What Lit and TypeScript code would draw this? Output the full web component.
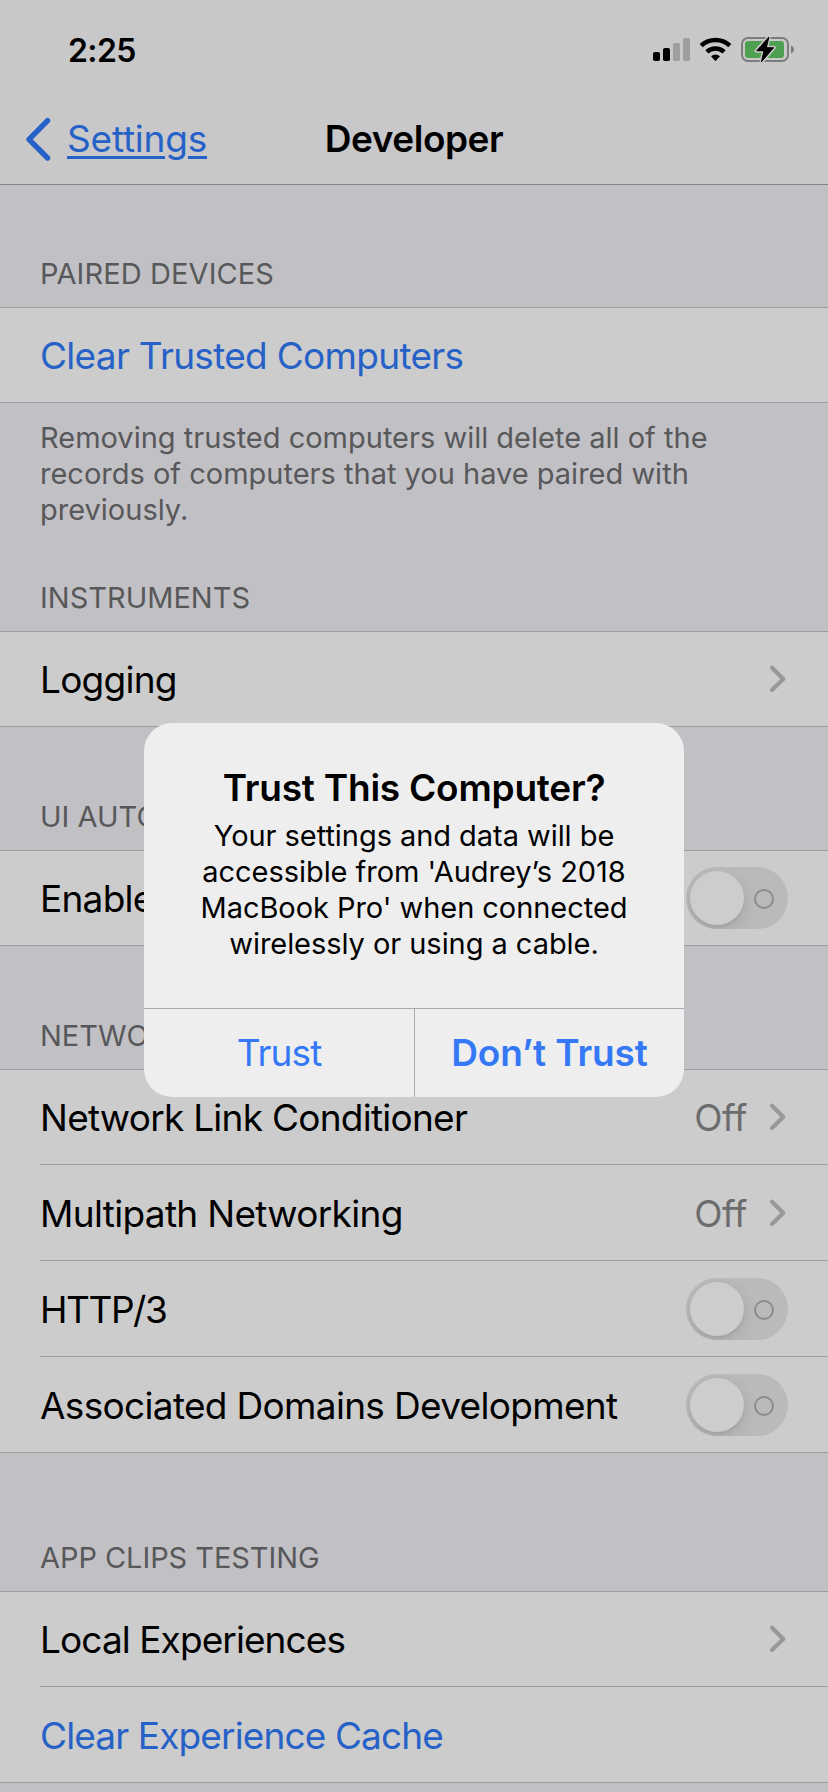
import { LitElement, html, css, svg, nothing } from "lit";
import { customElement, property } from "lit/decorators.js";
import { classMap } from "lit/directives/class-map.js";
import { styleMap } from "lit/directives/style-map.js";

type Row = {
  label: string;
  tracking: number;
  action?: boolean;
  value?: string;
  accessory?: "chevron" | "toggle";
};

type Section = {
  header: string;
  tall?: boolean;
  compact?: boolean;
  tracking?: number;
  rows: Row[];
  footer?: string;
};

const SECTIONS: Section[] = [
  {
    header: "PAIRED DEVICES",
    tracking: 0.09,
    rows: [{ label: "Clear Trusted Computers", tracking: -0.7, action: true }],
    footer:
      "Removing trusted computers will delete all of the records of computers that you have paired with previously.",
  },
  {
    header: "INSTRUMENTS",
    compact: true,
    rows: [{ label: "Logging", tracking: -0.75, accessory: "chevron" }],
  },
  {
    header: "UI AUTOMATION",
    rows: [{ label: "Enable UI Automation", tracking: -0.75, accessory: "toggle" }],
  },
  {
    header: "NETWORKING",
    rows: [
      { label: "Network Link Conditioner", tracking: -0.74, value: "Off", accessory: "chevron" },
      { label: "Multipath Networking", tracking: -0.68, value: "Off", accessory: "chevron" },
      { label: "HTTP/3", tracking: -1.45, accessory: "toggle" },
      { label: "Associated Domains Development", tracking: -0.68, accessory: "toggle" },
    ],
  },
  {
    header: "APP CLIPS TESTING",
    tall: true,
    tracking: -0.06,
    rows: [
      { label: "Local Experiences", tracking: -0.91, accessory: "chevron" },
      { label: "Clear Experience Cache", tracking: -0.87, action: true },
    ],
  },
];

@customElement("status-bar")
class StatusBar extends LitElement {
  static styles = css`
    :host {
      display: flex;
      align-items: center;
      justify-content: space-between;
      box-sizing: border-box;
      height: 93px;
      padding: 6px 32px 0 68px;
    }
    .time {
      padding-top: 1px;
      font-size: 32px;
      font-weight: 600;
      letter-spacing: -0.6px;
      color: #000;
    }
    .icons {
      display: block;
    }
  `;

  render() {
    return html`
      <span class="time">2:25</span>
      <svg class="icons" width="144" height="28" viewBox="652 36 144 28">
        <rect x="653" y="52" width="7" height="9" rx="1.8" />
        <rect x="663" y="48" width="7" height="13" rx="1.8" />
        <rect x="673" y="43" width="7" height="18" rx="1.8" fill="#9f9fa1" />
        <rect x="683" y="38" width="7" height="23" rx="1.8" fill="#9f9fa1" />
        <path d="M701.2 45.6 A21 21 0 0 1 729.8 45.6" fill="none" stroke="#000" stroke-width="4.6" />
        <path d="M706.9 51.9 A12.6 12.6 0 0 1 724.1 51.9" fill="none" stroke="#000" stroke-width="4.6" />
        <path d="M711 56.3 A6.6 6.6 0 0 1 720 56.3 L715.9 60.8 Q715.5 61.1 715.1 60.8 Z" />
        <rect x="742" y="38" width="46" height="23" rx="6" fill="none" stroke="#7c7c7e" stroke-width="2" />
        <rect x="745" y="41" width="39" height="17" rx="3.2" fill="#4f9f50" />
        <path d="M791 45.6 Q794 46.8 794 49.5 Q794 52.2 791 53.4 Z" fill="#7c7c7e" />
        <path
          d="M769 36.6 L756.3 51 H763.6 L761.4 62.2 L774 47.6 H766.5 Z"
          fill="#000"
          stroke="#c8c8ca"
          stroke-width="3.6"
          stroke-linejoin="round"
          paint-order="stroke"
        />
        <path
          d="M769 37 L756.8 50.8 H764 L761.4 61.8 L773.6 47.8 H766.3 Z"
          stroke="#000"
          stroke-width="0.8"
          stroke-linejoin="round"
        />
      </svg>
    `;
  }
}

@customElement("nav-bar")
class NavBar extends LitElement {
  static styles = css`
    :host {
      display: grid;
      grid-template-columns: 1fr auto 1fr;
      align-items: center;
      height: 91px;
      border-bottom: 1px solid #858587;
      font-size: 37px;
      line-height: 45px;
    }
    .back {
      display: flex;
      align-items: center;
      gap: 15px;
      padding-left: 24px;
      color: #2661c7;
    }
    .back-label {
      letter-spacing: -0.2px;
      text-decoration: underline;
      text-decoration-thickness: 3px;
      text-underline-offset: 4px;
    }
    .title {
      font-weight: 600;
      letter-spacing: -0.46px;
      color: #000;
    }
  `;

  render() {
    return html`
      <div class="back">
        <svg width="28" height="46" viewBox="0 0 28 46">
          <path
            d="M23.6 4.6 L5 23.4 L23.6 42"
            fill="none"
            stroke="currentColor"
            stroke-width="5.4"
            stroke-linecap="round"
            stroke-linejoin="round"
          />
        </svg>
        <span class="back-label">Settings</span>
      </div>
      <div class="title">Developer</div>
    `;
  }
}

@customElement("toggle-switch")
class ToggleSwitch extends LitElement {
  static styles = css`
    :host {
      display: flex;
      align-items: center;
      justify-content: space-between;
      box-sizing: border-box;
      width: 102px;
      height: 62px;
      padding: 0 14px 0 4px;
      border-radius: 31px;
      background: #bababa;
      overflow: hidden;
    }
    .knob {
      width: 54px;
      height: 54px;
      border-radius: 50%;
      background: #cdcdcd;
      box-shadow: 0 5px 14px rgba(0, 0, 0, 0.12), 0 3px 2px rgba(0, 0, 0, 0.03);
    }
    .ring {
      box-sizing: border-box;
      width: 20px;
      height: 20px;
      margin-top: 2px;
      border: 2px solid #8c8c8c;
      border-radius: 50%;
    }
  `;

  render() {
    return html`<span class="knob"></span><span class="ring"></span>`;
  }
}

@customElement("settings-section")
class SettingsSection extends LitElement {
  @property({ attribute: false }) section!: Section;

  static styles = css`
    :host {
      display: block;
    }
    .header {
      display: flex;
      align-items: flex-end;
      box-sizing: border-box;
      height: 123px;
      padding: 0 40px 15px;
      font-size: 29px;
      line-height: 36px;
      color: #58585a;
    }
    .header.compact {
      height: 103px;
    }
    .header.tall {
      height: 138px;
    }
    .rows {
      border-top: 1px solid #9c9c9e;
      border-bottom: 1px solid #9c9c9e;
      background: #ccc;
    }
    .row {
      display: flex;
      align-items: center;
      height: 94px;
      margin-left: 40px;
      padding-right: 40px;
      font-size: 37px;
      line-height: 45px;
      color: #000;
    }
    .row + .row {
      padding-top: 1px;
      border-top: 1px solid #9c9c9e;
    }
    .label {
      flex: 1;
      white-space: nowrap;
    }
    .action {
      color: #2661c7;
    }
    .value {
      margin-right: 21px;
      letter-spacing: -0.5px;
      color: #6c6c6e;
    }
    .chevron {
      display: block;
    }
    .footer {
      box-sizing: border-box;
      height: 125px;
      padding: 17px 40px 0;
      font-size: 29px;
      line-height: 36px;
      color: #58585a;
    }
  `;

  private accessory(row: Row) {
    if (row.accessory === "toggle") return html`<toggle-switch></toggle-switch>`;
    if (row.accessory === "chevron")
      return html`
        <svg class="chevron" width="20" height="30" viewBox="0 0 20 30">
          ${svg`<path d="M4 3.7 L15.3 14.9 L4 26" fill="none" stroke="#98989a" stroke-width="4.2" stroke-linecap="round" stroke-linejoin="round" />`}
        </svg>
      `;
    return nothing;
  }

  render() {
    const { header, tall, compact, tracking = 0, rows, footer } = this.section;
    return html`
      <div
        class=${classMap({ header: true, tall: !!tall, compact: !!compact })}
        style=${styleMap({ letterSpacing: `${tracking}px` })}
      >
        ${header}
      </div>
      <div class="rows">
        ${rows.map(
          (row) => html`
            <div class="row">
              <span
                class=${classMap({ label: true, action: !!row.action })}
                style=${styleMap({ letterSpacing: `${row.tracking}px` })}
                >${row.label}</span
              >
              ${row.value ? html`<span class="value">${row.value}</span>` : nothing}
              ${this.accessory(row)}
            </div>
          `
        )}
      </div>
      ${footer ? html`<div class="footer">${footer}</div>` : nothing}
    `;
  }
}

@customElement("trust-alert")
class TrustAlert extends LitElement {
  static styles = css`
    :host {
      display: flex;
      flex-direction: column;
      box-sizing: border-box;
      width: 540px;
      height: 374px;
      border-radius: 28px;
      background: #eeeeef;
      overflow: hidden;
      text-align: center;
      color: #000;
    }
    .body {
      flex: 1;
      padding: 42px 40px 0;
    }
    .title {
      margin-bottom: 8px;
      font-size: 37px;
      font-weight: 600;
      line-height: 45px;
      letter-spacing: -0.22px;
    }
    .message {
      font-size: 29px;
      line-height: 36px;
      letter-spacing: -0.05px;
    }
    .buttons {
      display: grid;
      grid-template-columns: 270px 1fr;
      height: 88px;
      border-top: 1px solid #a9a9ab;
    }
    .button {
      display: flex;
      align-items: center;
      justify-content: center;
      padding-bottom: 1px;
      font-size: 37px;
      line-height: 45px;
      letter-spacing: -0.9px;
      color: #3478f6;
    }
    .button.preferred {
      border-left: 1px solid #a9a9ab;
      font-weight: 600;
      letter-spacing: -0.1px;
    }
  `;

  render() {
    return html`
      <div class="body">
        <div class="title">Trust This Computer?</div>
        <div class="message">
          Your settings and data will be<br />accessible from 'Audrey’s 2018<br />MacBook Pro' when
          connected<br />wirelessly or using a cable.
        </div>
      </div>
      <div class="buttons">
        <div class="button">Trust</div>
        <div class="button preferred">Don’t Trust</div>
      </div>
    `;
  }
}

@customElement("app-root")
class AppRoot extends LitElement {
  static styles = css`
    :host {
      display: block;
      position: relative;
      width: 828px;
      height: 1792px;
      overflow: hidden;
      background: #c1c0c5;
      font-family: Inter, "Liberation Sans", sans-serif;
    }
    .top {
      background: linear-gradient(90deg, #c9c9c8, #c8c8ca 12%, #c8c8ca 75%, #c9c9c9);
    }
    .list {
      margin-top: -1px;
    }
    .alert {
      position: absolute;
      top: 723px;
      left: 144px;
    }
  `;

  render() {
    return html`
      <div class="top">
        <status-bar></status-bar>
        <nav-bar></nav-bar>
      </div>
      <div class="list">
        ${SECTIONS.map((s) => html`<settings-section .section=${s}></settings-section>`)}
      </div>
      <trust-alert class="alert"></trust-alert>
    `;
  }
}
